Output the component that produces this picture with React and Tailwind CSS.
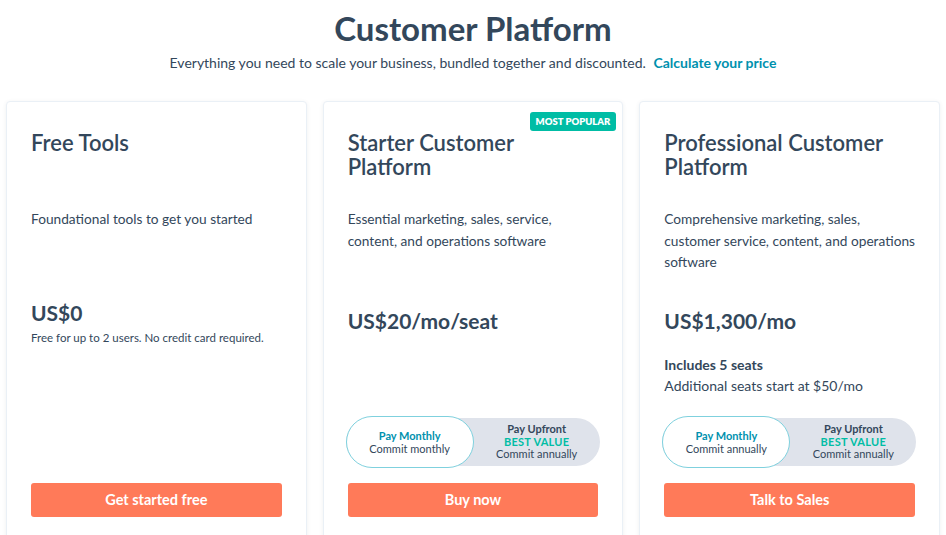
import React from "react";

const Toggle = ({monthlyNote}) => (
	<div className="flex h-[48px] w-[254px] -ml-[2px] items-center rounded-full bg-[#dfe3eb]">
		<div className="-my-[2px] flex h-[52px] w-[128px] flex-col items-center justify-center rounded-full border border-[#7fd1de] bg-white text-[11px] leading-[13px]">
			<span className="font-bold text-[#0091ae]">Pay Monthly</span>
			<span className="text-[#33475b]">{monthlyNote}</span>
		</div>
		<div className="flex flex-1 flex-col items-center justify-center text-[11px] leading-[12.5px]">
			<span className="font-bold text-[#33475b]">Pay Upfront</span>
			<span className="font-bold tracking-wide text-[#00bda5]">BEST VALUE</span>
			<span className="text-[#33475b]">Commit annually</span>
		</div>
	</div>
);

const PlanCard = ({title, desc, priceTop, children, cta, badge}) => (
	<div className="relative flex flex-col rounded-[4px] border border-[#eaf0f6] bg-white px-[24px] pt-[29px] pb-[30px] shadow-[0_1px_4px_rgba(45,62,80,0.08)]">
		{badge && (
			<span className="absolute right-[6px] top-[10px] rounded-[3px] bg-[#00bda5] px-[6px] py-[3px] text-[9.5px] font-extrabold uppercase leading-[13px] text-white">
				{badge}
			</span>
		)}
		<div className="flex h-[352px] flex-col">
			<h2 className="h-[48px] max-w-[235px] text-[22px] font-semibold leading-[24px] text-[#33475b]">
				{title}
			</h2>
			<p className="mt-[29px] h-[91px] whitespace-nowrap text-[13.7px] leading-[21.5px] text-[#33475b]">
				{desc}
			</p>
			<div className={priceTop}>{children}</div>
		</div>
		<button className="h-[34px] w-full rounded-[3px] bg-[#ff7a59] text-[14.5px] font-bold text-white">
			{cta}
		</button>
	</div>
);

export default function App() {
	return (
		<div
			className="h-[535px] w-[946px] overflow-hidden bg-white text-[#33475b]"
			style={{fontFamily: "Lato, 'Noto Sans', sans-serif"}}
		>
			<div className="flex flex-col items-center pt-[8px]">
				<h1 className="text-[33px] font-bold leading-[40px] text-[#33475b]">
					Customer Platform
				</h1>
				<p className="mt-[5px] text-[14px] leading-[20px] text-[#33475b]">
					Everything you need to scale your business, bundled together and discounted.{" "}
					<a className="ml-[4px] font-bold text-[#0091ae]">Calculate your price</a>
				</p>
			</div>

			<div className="mt-[28px] grid grid-cols-3 gap-[16px] px-[6px]">
				<PlanCard
					title="Free Tools"
					desc="Foundational tools to get you started"
					priceTop="flex flex-1 flex-col"
					cta="Get started free"
				>
					<div className="text-[21px] font-bold leading-[28px]">US$0</div>
					<div className="mt-[3px] text-[11.5px] leading-[16px]">
						Free for up to 2 users. No credit card required.
					</div>
				</PlanCard>

				<PlanCard
					title="Starter Customer Platform"
					desc={
						<>
							Essential marketing, sales, service,
							<br />
							content, and operations software
						</>
					}
					priceTop="flex flex-1 flex-col pt-[8px]"
					cta="Buy now"
					badge="Most Popular"
				>
					<div className="text-[21px] font-bold leading-[28px]">US$20/mo/seat</div>
					<div className="mt-auto mb-[17px]">
						<Toggle monthlyNote="Commit monthly" />
					</div>
				</PlanCard>

				<PlanCard
					title="Professional Customer Platform"
					desc={
						<>
							Comprehensive marketing, sales,
							<br />
							customer service, content, and operations
							<br />
							software
						</>
					}
					priceTop="flex flex-1 flex-col pt-[8px]"
					cta="Talk to Sales"
				>
					<div className="text-[21px] font-bold leading-[28px]">US$1,300/mo</div>
					<div className="mt-[20px] text-[14px] font-bold leading-[20px]">Includes 5 seats</div>
					<div className="mt-[1px] text-[14px] leading-[20px]">Additional seats start at $50/mo</div>
					<div className="mt-auto mb-[17px]">
						<Toggle monthlyNote="Commit annually" />
					</div>
				</PlanCard>
			</div>
		</div>
	);
}
